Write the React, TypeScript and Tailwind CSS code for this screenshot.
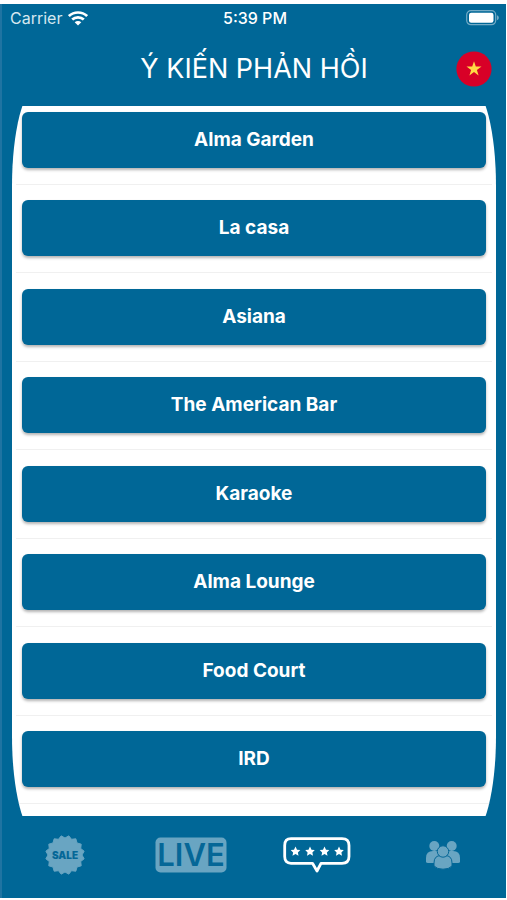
import React, { useState } from 'react';

interface Venue {
  id: string;
  name: string;
}

const venues: Venue[] = [
  { id: 'garden', name: 'Alma Garden' },
  { id: 'casa', name: 'La casa' },
  { id: 'asiana', name: 'Asiana' },
  { id: 'bar', name: 'The American Bar' },
  { id: 'karaoke', name: 'Karaoke' },
  { id: 'lounge', name: 'Alma Lounge' },
  { id: 'food', name: 'Food Court' },
  { id: 'ird', name: 'IRD' },
];

const STAR = 'M0 -4.9 L1.5 -1.7 L4.8 -1.5 L2.4 0.9 L3 4.3 L0 2.6 L-3 4.3 L-2.4 0.9 L-4.8 -1.5 L-1.5 -1.7 Z';

// Outline of the seal: 16 teeth around the centre of a 40x40 box
const sealPoints = Array.from({ length: 32 }, (_, i) => {
  const radius = i % 2 === 0 ? 19.5 : 17;
  const angle = ((i + 1) * Math.PI) / 16;
  return `${(20 + radius * Math.cos(angle)).toFixed(2)},${(20 + radius * Math.sin(angle)).toFixed(2)}`;
}).join(' ');

const WifiIcon = () => (
  <svg width="20" height="15" viewBox="0 0 20 15" aria-hidden="true">
    <g fill="none" stroke="#fff" strokeWidth="2.7">
      <path d="M0.9 5.1 C6 0.3 14 0.3 19.1 5.1" />
      <path d="M4.2 8.6 C7.4 5.6 12.6 5.6 15.8 8.6" />
    </g>
    <path d="M6.7 11.2 C8.6 9.5 11.4 9.5 13.3 11.2 L10 14.6 Z" fill="#fff" />
  </svg>
);

const BatteryIcon = () => (
  <svg width="34" height="16" viewBox="0 0 34 16" aria-hidden="true">
    <rect x="0.7" y="0.7" width="29" height="14" rx="4.2" fill="none" stroke="#fff" strokeOpacity="0.45" strokeWidth="1.2" />
    <rect x="3" y="2.8" width="24.5" height="10" rx="2.2" fill="#fff" />
    <path d="M31 5.2 C33.4 6 33.4 9.4 31 10.2 Z" fill="#fff" fillOpacity="0.45" />
  </svg>
);

const FlagIcon = () => (
  <svg width="36" height="36" viewBox="0 0 36 36" aria-hidden="true">
    <circle cx="18" cy="18" r="17.6" fill="#d80027" />
    <path d="M18 10.2 L19.8 15.6 L25.5 15.6 L20.9 19 L22.6 24.4 L18 21.1 L13.4 24.4 L15.1 19 L10.5 15.6 L16.2 15.6 Z" fill="#ffda44" />
  </svg>
);

const SaleIcon = () => (
  <svg width="40" height="40" viewBox="0 0 40 40" aria-hidden="true">
    <polygon points={sealPoints} fill="#69a5c2" stroke="#69a5c2" strokeLinejoin="round" />
    <text x="20" y="24" textAnchor="middle" className="fill-[#056797] font-['Inter',sans-serif] text-[10px] font-black">SALE</text>
  </svg>
);

const LiveIcon = () => (
  <svg width="72" height="36" viewBox="0 0 72 36" aria-hidden="true">
    <rect x="0.5" y="0.5" width="71" height="35" rx="5" fill="#69a5c2" />
    <text x="36" y="29" textAnchor="middle" className="fill-[#056797] font-['Inter',sans-serif] text-[31px] font-semibold">LIVE</text>
  </svg>
);

const ReviewIcon = () => (
  <svg width="68" height="36" viewBox="0 0 68 36" aria-hidden="true">
    <path
      d="M8 1.7 H59 Q66 1.7 66 8.5 V19.5 Q66 26.3 59 26.3 H38 L34 34 L29.5 26.3 H8 Q1.7 26.3 1.7 19.5 V8.5 Q1.7 1.7 8 1.7 Z"
      fill="none"
      stroke="#fff"
      strokeWidth="2.8"
      strokeLinejoin="round"
    />
    {[12.5, 27, 41.5, 56].map((x) => (
      <path key={x} d={STAR} transform={`translate(${x} 14.5)`} fill="#fff" />
    ))}
  </svg>
);

const PeopleIcon = () => (
  <svg width="36" height="30" viewBox="0 0 36 30" aria-hidden="true">
    <g fill="#69a5c2">
      <circle cx="9.3" cy="6" r="5" />
      <circle cx="26.7" cy="6" r="5" />
      <path d="M1 21.5 V18 Q1 11 8 11 H11 Q17 11 17 18 V23 H3 Q1 23 1 21.5 Z" />
      <path d="M35 21.5 V18 Q35 11 28 11 H25 Q19 11 19 18 V23 H33 Q35 23 35 21.5 Z" />
    </g>
    <g fill="#69a5c2" stroke="#056797" strokeWidth="1">
      <path d="M9 26 V23 Q9 15.5 16 15.5 H20 Q27 15.5 27 23 V26 Q24 29.2 18 29.2 Q12 29.2 9 26 Z" />
      <circle cx="18" cy="11.5" r="5.7" />
    </g>
  </svg>
);

const tabs = [
  { id: 'sale', label: 'Sale', icon: <SaleIcon /> },
  { id: 'live', label: 'Live', icon: <LiveIcon /> },
  { id: 'feedback', label: 'Feedback', icon: <ReviewIcon /> },
  { id: 'community', label: 'Community', icon: <PeopleIcon /> },
];

const App: React.FC = () => {
  const [activeTab, setActiveTab] = useState('feedback');

  return (
    <div className="flex min-h-screen flex-col bg-white pt-1 pb-0.5 pr-px font-['Inter','Liberation_Sans',sans-serif]">
      <div className="flex flex-1 flex-col border-l-2 border-[#1f74a2] bg-[#006797] text-white">
        {/* Status bar */}
        <div className="grid h-7 grid-cols-3 items-center pr-1.5 pl-2 text-base leading-5">
          <div className="flex items-center gap-1.5 text-[#d5e8f0]">
            <span>Carrier</span>
            <WifiIcon />
          </div>
          <span className="text-center font-medium">5:39 PM</span>
          <div className="flex justify-end">
            <BatteryIcon />
          </div>
        </div>

        {/* Title */}
        <header className="grid h-[74px] grid-cols-[64px_1fr_64px] items-center">
          <h1 className="col-start-2 text-center text-[27px] leading-9">Ý KIẾN PHẢN HỒI</h1>
          <button type="button" aria-label="Tiếng Việt" className="justify-self-center">
            <FlagIcon />
          </button>
        </header>

        {/* Venue list */}
        <main className="flex flex-1 flex-col overflow-hidden px-2.5">
          <div className="-my-5 flex flex-1 flex-col overflow-hidden rounded-[26px/100px] bg-white py-5">
            <ul className="flex flex-1 flex-col justify-between gap-3 pt-1.5 pb-3">
              {venues.map((venue) => (
                <li key={venue.id} className="mx-1 border-b border-[#f0f0f0] px-1.5 pb-4">
                  <button
                    type="button"
                    className="h-14 w-full rounded-md bg-[#006797] text-[19px] leading-6 font-bold shadow-[0_2px_3px_rgba(0,0,0,0.3)]"
                  >
                    {venue.name}
                  </button>
                </li>
              ))}
            </ul>
          </div>
        </main>

        {/* Tab bar */}
        <nav className="grid h-[82px] grid-cols-4 pb-1">
          {tabs.map((tab) => (
            <button
              key={tab.id}
              type="button"
              aria-label={tab.label}
              aria-pressed={activeTab === tab.id}
              onClick={() => setActiveTab(tab.id)}
              className="flex items-center justify-center"
            >
              {tab.icon}
            </button>
          ))}
        </nav>
      </div>
    </div>
  );
};

export default App;
